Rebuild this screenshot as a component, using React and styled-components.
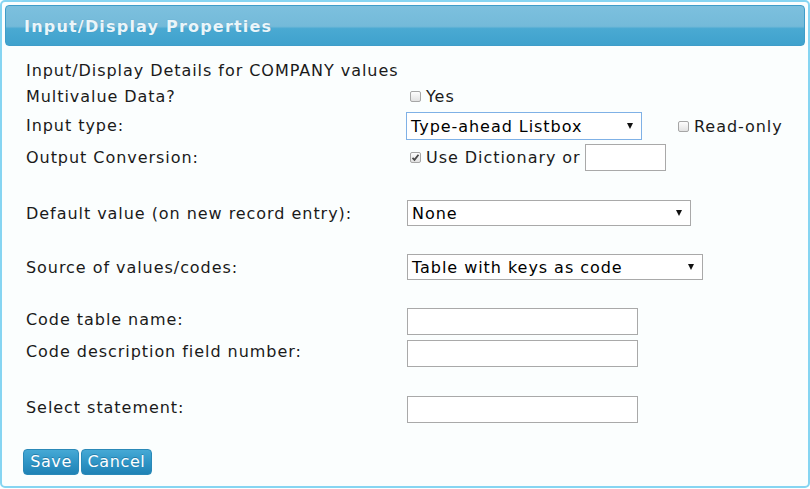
import React from "react";
import styled, { createGlobalStyle } from "styled-components";

const Global = createGlobalStyle`
  html, body { margin: 0; padding: 0; background: #ffffff; }
  body { font-family: "DejaVu Sans", Verdana, sans-serif; }
`;

const Panel = styled.div`
  box-sizing: border-box;
  width: 810px;
  height: 488px;
  border: 2px solid #86d5f2;
  border-radius: 5px;
  background: #fbfefe;
  padding: 3px;
  display: flex;
  flex-direction: column;
  letter-spacing: 0.95px;
`;

const Header = styled.div`
  box-sizing: border-box;
  height: 41px;
  border: 1px solid #3f9dc9;
  border-radius: 4px;
  background: linear-gradient(
    to bottom,
    #7cc0de 0%,
    #74bad9 52%,
    #4aa9d2 58%,
    #3fa2cd 100%
  );
  display: flex;
  align-items: center;
  padding-left: 18px;
`;

const Title = styled.h1`
  margin: 0;
  font-family: "DejaVu Sans", Verdana, sans-serif;
  font-weight: bold;
  font-size: 16px;
  letter-spacing: 1.2px;
  color: #eaf5fa;
  text-shadow: 0 0 1px rgba(40, 110, 150, 0.4);
  padding-top: 2px;
`;

const Body = styled.div`
  display: flex;
  flex-direction: column;
  padding: 12px 0 0 21px;
`;

const Row = styled.div`
  display: grid;
  grid-template-columns: 381px 1fr;
  align-items: center;
  height: ${(p) => p.$h}px;
  margin-top: ${(p) => p.$mt || 0}px;
  font-size: 16px;
  color: #1a1a1a;
`;

const Label = styled.div`
  white-space: nowrap;
  padding-bottom: ${(p) => p.$pb || 0}px;
`;

const Cell = styled.div`
  display: flex;
  align-items: center;
  white-space: nowrap;
`;

const CheckBox = styled.span`
  box-sizing: border-box;
  display: inline-flex;
  align-items: center;
  justify-content: center;
  width: 11px;
  height: 11px;
  border: 1px solid #a6a6a6;
  border-radius: 2px;
  background: linear-gradient(to bottom, #fdfdfd, #e2e2e2);
  margin: 0 ${(p) => p.$mr || 5}px 0 ${(p) => p.$ml || 3}px;
`;

const CheckLabel = styled.span`
  font-size: 16px;
  color: #1a1a1a;
`;

const SelectBox = styled.div`
  box-sizing: border-box;
  width: ${(p) => p.$w}px;
  height: ${(p) => p.$ht || 26}px;
  border: 1px solid ${(p) => (p.$focus ? "#7fb1e6" : "#a9a9a9")};
  background: #ffffff;
  display: flex;
  align-items: center;
  justify-content: space-between;
  padding: 0 8px 0 4px;
  font-size: 16px;
  color: #000;
`;

const Arrow = styled.span`
  width: 0;
  height: 0;
  border-left: 3px solid transparent;
  border-right: 3px solid transparent;
  border-top: 6px solid #111;
`;

const TextBox = styled.input`
  box-sizing: border-box;
  width: ${(p) => p.$w}px;
  height: 27px;
  border: 1px solid #a9a9a9;
  background: #ffffff;
  margin: 0 0 0 ${(p) => p.$ml || 0}px;
  padding: 0 4px;
  font-family: "DejaVu Sans", Verdana, sans-serif;
  font-size: 15px;
  outline: none;
`;

const Spacer = styled.span`
  width: ${(p) => p.$w}px;
  flex: none;
`;

const ButtonBar = styled.div`
  display: flex;
  gap: 2px;
  margin-top: 24px;
  margin-left: -3px;
`;

const Button = styled.button`
  box-sizing: border-box;
  height: 26px;
  width: ${(p) => p.$w}px;
  padding: 0;
  border: 1px solid #2a89b8;
  border-radius: 4px;
  background: linear-gradient(to bottom, #46a9d5 0%, #2f95c6 50%, #1f82b5 100%);
  color: #ffffff;
  font-family: "DejaVu Sans", Verdana, sans-serif;
  font-size: 16px;
  letter-spacing: 0.6px;
  line-height: 22px;
  text-shadow: 0 -1px 0 rgba(0, 60, 100, 0.35);
  cursor: pointer;
`;

const Check = ({ checked, ml, mr }) => (
  <CheckBox $ml={ml} $mr={mr}>
    {checked && (
      <svg width="9" height="9" viewBox="0 0 9 9">
        <path d="M1.5 4.8 L3.5 6.8 L7.5 1.8" fill="none" stroke="#4a4a4a" strokeWidth="1.8" />
      </svg>
    )}
  </CheckBox>
);

export default function App() {
  return (
    <>
      <Global />
      <Panel>
        <Header>
          <Title>Input/Display Properties</Title>
        </Header>
        <Body>
          <Row $h={24}>
            <Label>Input/Display Details for COMPANY values</Label>
            <Cell />
          </Row>
          <Row $h={28}>
            <Label>Multivalue Data?</Label>
            <Cell>
              <Check />
              <CheckLabel>Yes</CheckLabel>
            </Cell>
          </Row>
          <Row $h={32}>
            <Label $pb={2}>Input type:</Label>
            <Cell>
              <SelectBox $w={236} $ht={28} $focus style={{ marginLeft: -1 }}>
                <span>Type-ahead Listbox</span>
                <Arrow />
              </SelectBox>
              <Spacer $w={33} />
              <Check ml={3} mr={5} />
              <CheckLabel>Read-only</CheckLabel>
            </Cell>
          </Row>
          <Row $h={30}>
            <Label>Output Conversion:</Label>
            <Cell>
              <Check checked />
              <CheckLabel>Use Dictionary or</CheckLabel>
              <TextBox $w={81} $ml={4} />
            </Cell>
          </Row>
          <Row $h={28} $mt={27}>
            <Label>Default value (on new record entry):</Label>
            <Cell>
              <SelectBox $w={284}>
                <span>None</span>
                <Arrow />
              </SelectBox>
            </Cell>
          </Row>
          <Row $h={28} $mt={26}>
            <Label>Source of values/codes:</Label>
            <Cell>
              <SelectBox $w={296}>
                <span>Table with keys as code</span>
                <Arrow />
              </SelectBox>
            </Cell>
          </Row>
          <Row $h={32} $mt={24}>
            <Label $pb={3}>Code table name:</Label>
            <Cell>
              <TextBox $w={231} />
            </Cell>
          </Row>
          <Row $h={32}>
            <Label $pb={3}>Code description field number:</Label>
            <Cell>
              <TextBox $w={231} />
            </Cell>
          </Row>
          <Row $h={32} $mt={24}>
            <Label $pb={3}>Select statement:</Label>
            <Cell>
              <TextBox $w={231} />
            </Cell>
          </Row>
          <ButtonBar>
            <Button $w={56}>Save</Button>
            <Button $w={71}>Cancel</Button>
          </ButtonBar>
        </Body>
      </Panel>
    </>
  );
}
